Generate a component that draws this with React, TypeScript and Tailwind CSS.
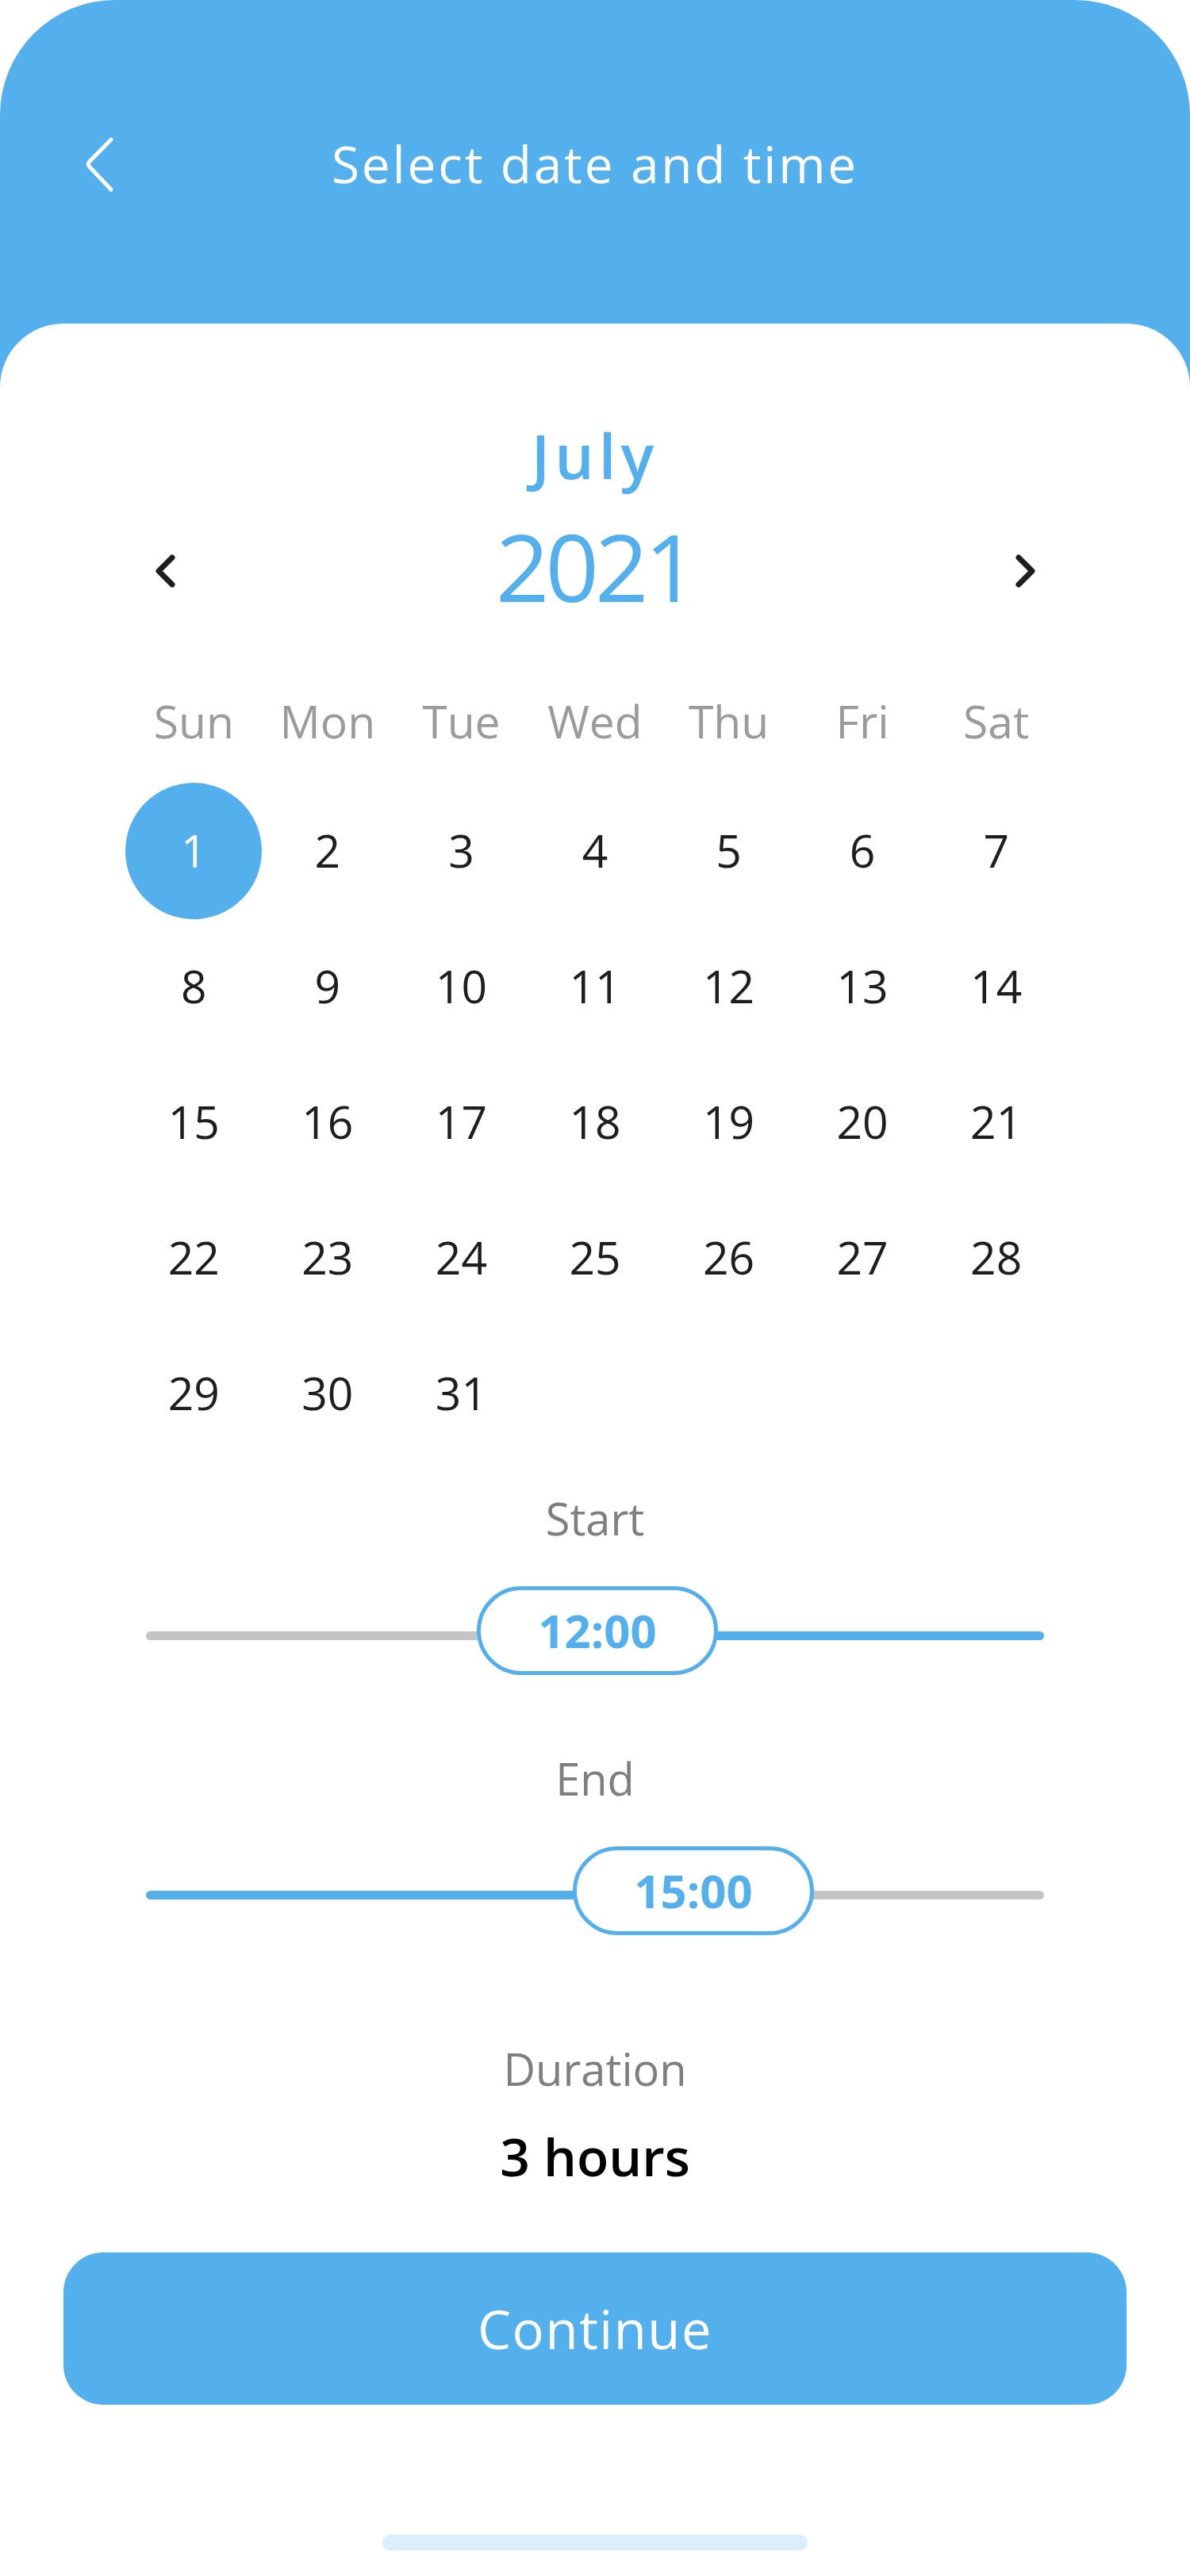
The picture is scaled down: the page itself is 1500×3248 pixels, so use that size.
import React from "react";

const days: number[] = [];
for (let i = 1; i <= 31; i++) days.push(i);

const weekdays = ["Sun", "Mon", "Tue", "Wed", "Thu", "Fri", "Sat"];

function BackChevron() {
  return (
    <svg width="40" height="72" viewBox="0 0 40 72" fill="none">
      <path
        d="M35 5 L7.5 33 Q5 36 7.5 39 L35 68"
        stroke="#ffffff"
        strokeWidth="5"
        strokeLinecap="round"
        strokeLinejoin="round"
      />
    </svg>
  );
}

function NavChevron({ dir }: { dir: "left" | "right" }) {
  const d = dir === "left" ? "M24 5 L7 22 L24 39" : "M7 5 L24 22 L7 39";
  return (
    <svg width="30" height="44" viewBox="0 0 30 44" fill="none">
      <path d={d} stroke="#1e1e1e" strokeWidth="7" strokeLinecap="round" strokeLinejoin="round" />
    </svg>
  );
}

export default function App() {
  return (
    <div className="w-[1500px] h-[3248px] bg-white font-['Open_Sans',sans-serif] overflow-hidden">
      <div className="h-full bg-[#54afed] rounded-t-[145px] flex flex-col">
        <header className="h-[408px] shrink-0 pt-[171px] grid grid-cols-[1fr_auto_1fr] items-start">
          <div className="pl-[105px]">
            <BackChevron />
          </div>
          <h1 className="mt-[4px] text-white text-[64px] leading-none font-normal tracking-[2.8px]">
            Select date and time
          </h1>
          <div />
        </header>

        <main className="flex-1 bg-white rounded-t-[80px] flex flex-col items-center pt-[127px]">
          <div className="text-[#54afed] text-[78px] leading-none font-semibold tracking-[6px]">July</div>

          <div className="mt-[42px] w-full px-[193px] flex items-start justify-between">
            <div className="mt-[43px]">
              <NavChevron dir="left" />
            </div>
            <div className="text-[#54afed] text-[118px] leading-none font-normal tracking-[-5px]">2021</div>
            <div className="mt-[43px]">
              <NavChevron dir="right" />
            </div>
          </div>

          <div className="mt-[108px] w-[1180px] grid grid-cols-7">
            {weekdays.map((w) => (
              <div key={w} className="text-center text-[57px] leading-none text-[#9b9b9b]">
                {w}
              </div>
            ))}
          </div>

          <div className="mt-[49px] w-[1180px] grid grid-cols-7 auto-rows-[171px]">
            {days.map((d) => (
              <div key={d} className="flex items-center justify-center">
                {d === 1 ? (
                  <div className="w-[172px] h-[172px] shrink-0 rounded-full bg-[#54afed] flex items-center justify-center text-white text-[57px] leading-none">
                    1
                  </div>
                ) : (
                  <span className="text-[57px] leading-none text-[#1e1e1e]">{d}</span>
                )}
              </div>
            ))}
          </div>

          <div className="mt-[44px] text-[56px] leading-none text-[#7f7f7f]">Start</div>

          <div className="mt-[58px] relative w-[1132px] h-[112px]">
            <div className="pt-[57px] flex">
              <div className="w-[569px] h-[11px] bg-[#c4c4c4] rounded-l-full" />
              <div className="flex-1 h-[11px] bg-[#54afed] rounded-r-full" />
            </div>
            <div className="absolute left-[417px] top-0 w-[304px] h-[112px] rounded-full bg-white border-[5px] border-[#54afed] flex items-center justify-center text-[#54afed] text-[58px] leading-none font-bold">
              12:00
            </div>
          </div>

          <div className="mt-[102px] text-[56px] leading-none text-[#7f7f7f]">End</div>

          <div className="mt-[58px] relative w-[1132px] h-[112px]">
            <div className="pt-[56px] flex">
              <div className="w-[690px] h-[11px] bg-[#54afed] rounded-l-full" />
              <div className="flex-1 h-[11px] bg-[#c4c4c4] rounded-r-full" />
            </div>
            <div className="absolute left-[538px] top-0 w-[304px] h-[112px] rounded-full bg-white border-[5px] border-[#54afed] flex items-center justify-center text-[#54afed] text-[58px] leading-none font-bold">
              15:00
            </div>
          </div>

          <div className="mt-[140px] text-[56px] leading-none text-[#7f7f7f]">Duration</div>
          <div className="mt-[49px] text-[66px] leading-none font-semibold text-black">3 hours</div>

          <button className="mt-[89px] w-[1340px] h-[192px] rounded-[50px] bg-[#54afed] flex items-center justify-center text-white text-[67px] leading-none font-normal tracking-[1.5px]">
            Continue
          </button>

          <div className="mt-[164px] w-[536px] h-[20px] rounded-full bg-[#dceefc]" />
        </main>
      </div>
    </div>
  );
}
